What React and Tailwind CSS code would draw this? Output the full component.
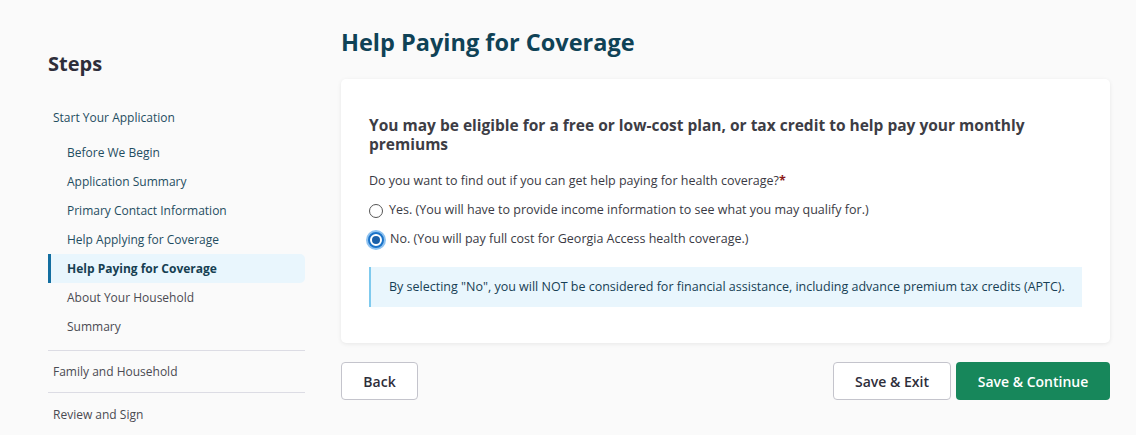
import React from "react";

const font = { fontFamily: '"Open Sans", "Noto Sans", sans-serif' };

function Radio({ checked, children }) {
  return (
    <label className="flex items-center gap-[6px] h-[29px] text-[12.5px] text-[#3a3a44]">
      {checked ? (
        <span className="w-[16px] h-[16px] rounded-full border-2 border-[#1a73c9] bg-white flex items-center justify-center shadow-[0_0_0_2px_#8ec2f0] ml-[-1px]">
          <span className="w-[8px] h-[8px] rounded-full bg-[#1a5fa8]" />
        </span>
      ) : (
        <span className="w-[14px] h-[14px] rounded-full border border-[#555] bg-white" />
      )}
      <span>{children}</span>
    </label>
  );
}

export default function App() {
  const subs = [
    "Before We Begin",
    "Application Summary",
    "Primary Contact Information",
    "Help Applying for Coverage",
    "Help Paying for Coverage",
    "About Your Household",
    "Summary",
  ];
  return (
    <div className="w-[1136px] h-[435px] bg-[#fafafa] overflow-hidden flex pl-[48px] pr-[26px]" style={font}>
      <aside className="w-[257px] shrink-0 pt-[52px]">
        <h2 className="text-[20px] font-bold text-[#2e2e3a] leading-[24px]">Steps</h2>
        <div className="mt-[27px] text-[12px]">
          <div className="pl-[5px] h-[29px] flex items-center text-[#1f4d61]">Start Your Application</div>
          <div className="mt-[6px] flex flex-col">
            {subs.map((s, i) => {
              const active = s === "Help Paying for Coverage";
              const done = i < 4;
              return (
                <div
                  key={s}
                  className={
                    active
                      ? "h-[29px] flex items-center pl-[19px] bg-[#e9f6fd] border-l-[3px] border-[#136ea0] rounded-r-[5px] font-bold text-[#163f52]"
                      : "h-[29px] flex items-center pl-[19px] " + (done ? "text-[#1f4d61]" : "text-[#4a4a52]")
                  }
                >
                  {active ? <span className="ml-[-3px]">{s}</span> : s}
                </div>
              );
            })}
          </div>
          <div className="mt-[9px] border-t border-[#dcdce4]" />
          <div className="pl-[5px] h-[41px] flex items-center text-[#4a4a52]">Family and Household</div>
          <div className="border-t border-[#dcdce4]" />
          <div className="pl-[5px] h-[43px] flex items-center text-[#4a4a52]">Review and Sign</div>
        </div>
      </aside>
      <main className="flex-1 ml-[36px] pt-[27px]">
        <h1 className="text-[23.5px] font-bold text-[#0f4256] leading-[30px]">Help Paying for Coverage</h1>
        <section className="mt-[22px] bg-white rounded-[5px] shadow-[0_1px_4px_rgba(0,0,0,0.08)] px-[28px] pt-[37px] pb-[36px]">
          <h3 className="text-[15.5px] font-bold text-[#3d3d45] leading-[19px] pr-[20px]">
            You may be eligible for a free or low-cost plan, or tax credit to help pay your monthly premiums
          </h3>
          <p className="mt-[17px] text-[12.5px] text-[#3a3a44] leading-[20px]">
            Do you want to find out if you can get help paying for health coverage?<span className="text-[#8b1a1a] font-bold">*</span>
          </p>
          <div className="mt-[5px]">
            <Radio>Yes. (You will have to provide income information to see what you may qualify for.)</Radio>
            <Radio checked>No. (You will pay full cost for Georgia Access health coverage.)</Radio>
          </div>
          <div className="mt-[13px] bg-[#e9f6fd] border-l-2 border-[#7fcaee] h-[40px] flex items-center pl-[18px] text-[12.5px] text-[#173f55] whitespace-nowrap">
            By selecting "No", you will NOT be considered for financial assistance, including advance premium tax credits (APTC).
          </div>
        </section>
        <div className="mt-[19px] flex items-center">
          <button className="h-[38px] w-[77px] rounded-[4px] border border-[#c4c4cc] bg-white text-[14px] font-semibold text-[#2e2e3a]">Back</button>
          <div className="flex-1" />
          <button className="h-[38px] w-[118px] rounded-[4px] border border-[#c4c4cc] bg-white text-[14px] font-semibold text-[#2e2e3a]">Save &amp; Exit</button>
          <button className="ml-[5px] h-[38px] w-[154px] rounded-[4px] bg-[#17875b] text-[14px] font-semibold text-white">Save &amp; Continue</button>
        </div>
      </main>
    </div>
  );
}
